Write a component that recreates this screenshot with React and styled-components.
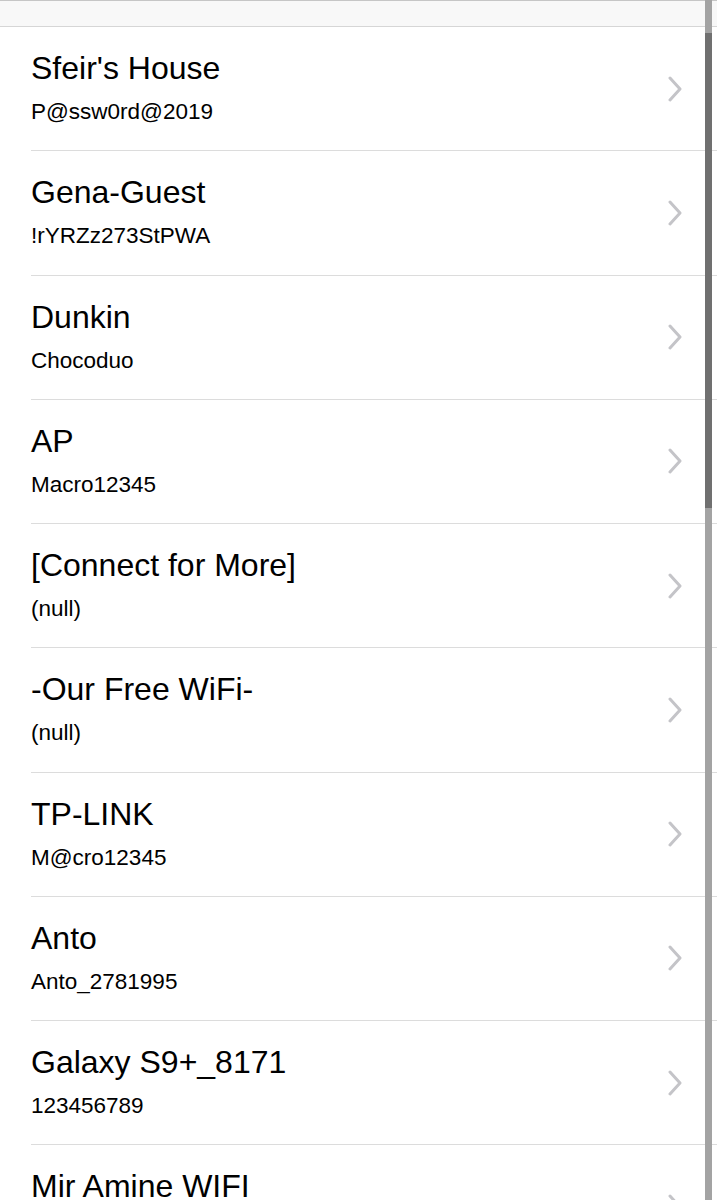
import React from "react";
import styled, { createGlobalStyle } from "styled-components";

const GlobalStyle = createGlobalStyle`
  html, body {
    margin: 0;
    padding: 0;
    background: #ffffff;
  }
  body {
    font-family: "Liberation Sans", Arial, sans-serif;
    color: #000;
    overflow: hidden;
  }
`;

const Screen = styled.div`
  position: relative;
  width: 717px;
  height: 1200px;
  overflow: hidden;
  background: #fff;
`;

const TopBar = styled.div`
  height: 25px;
  background: #f8f8f8;
  border-top: 1px solid #c6c6c6;
  border-bottom: 1px solid #d6d6d6;
`;

const List = styled.div`
  display: flex;
  flex-direction: column;
`;

const Row = styled.div`
  padding-left: 31px;
  height: 124.25px;
  box-sizing: border-box;
  display: flex;
`;

const RowInner = styled.div`
  flex: 1;
  display: flex;
  align-items: center;
  border-bottom: 1px solid #dcdcdc;
  padding-right: 34px;
`;

const Texts = styled.div`
  flex: 1;
  display: flex;
  flex-direction: column;
  margin-top: -3px;
`;

const Name = styled.div`
  font-size: 32px;
  line-height: 38px;
`;

const Password = styled.div`
  font-size: 22.5px;
  line-height: 27px;
  margin-top: 11px;
`;

const Chevron = styled.svg`
  width: 16px;
  height: 26px;
  flex-shrink: 0;
`;

const ScrollTrack = styled.div`
  position: absolute;
  top: 0;
  bottom: 0;
  left: 705px;
  width: 7px;
  background: #a3a3a3;
`;

const ScrollThumb = styled.div`
  position: absolute;
  top: 33px;
  left: 0;
  width: 7px;
  height: 475px;
  background: #707070;
`;

const networks = [
  { name: "Sfeir's House", password: "P@ssw0rd@2019" },
  { name: "Gena-Guest", password: "!rYRZz273StPWA" },
  { name: "Dunkin", password: "Chocoduo" },
  { name: "AP", password: "Macro12345" },
  { name: "[Connect for More]", password: "(null)" },
  { name: "-Our Free WiFi-", password: "(null)" },
  { name: "TP-LINK", password: "M@cro12345" },
  { name: "Anto", password: "Anto_2781995" },
  { name: "Galaxy S9+_8171", password: "123456789" },
  { name: "Mir Amine WIFI", password: "\u00a0" },
];

const ChevronIcon = () => (
  <Chevron viewBox="0 0 16 26">
    <path
      d="M3 2 L13 13 L3 24"
      fill="none"
      stroke="#c4c4c8"
      strokeWidth="3"
      strokeLinecap="round"
      strokeLinejoin="round"
    />
  </Chevron>
);

const App = () => {
  return (
    <Screen>
      <GlobalStyle />
      <TopBar />
      <List>
        {networks.map((net) => (
          <Row key={net.name}>
            <RowInner>
              <Texts>
                <Name>{net.name}</Name>
                <Password>{net.password}</Password>
              </Texts>
              <ChevronIcon />
            </RowInner>
          </Row>
        ))}
      </List>
      <ScrollTrack>
        <ScrollThumb />
      </ScrollTrack>
    </Screen>
  );
};

export default App;
